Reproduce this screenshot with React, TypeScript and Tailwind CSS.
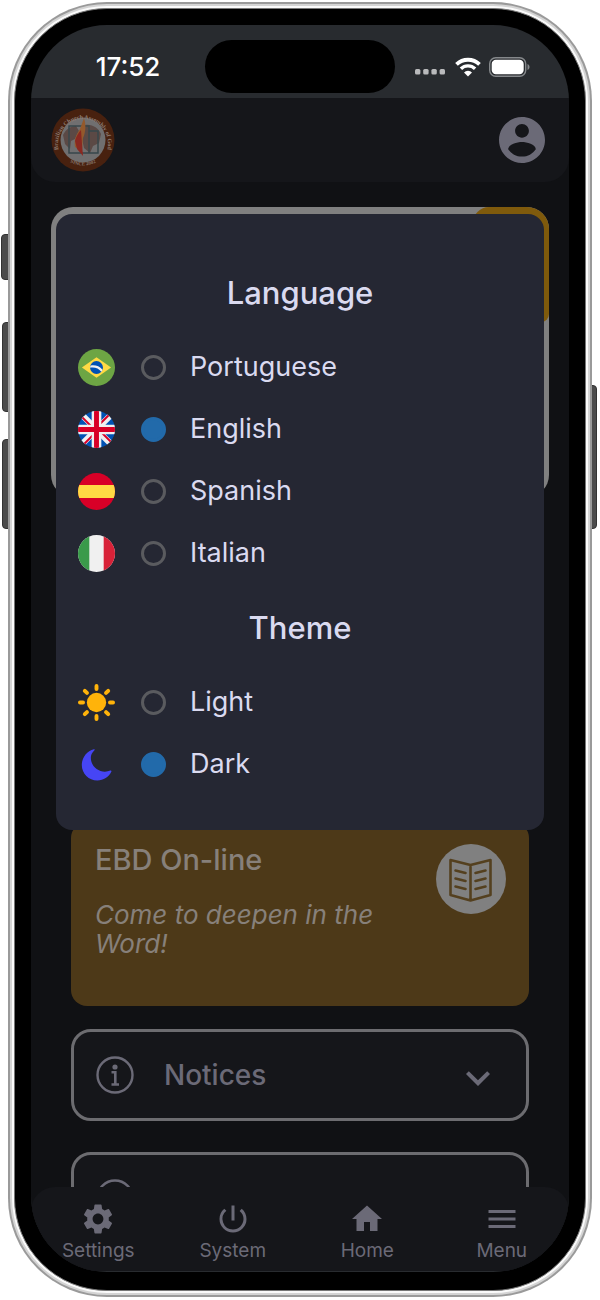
import { useState } from 'react'
import type { ReactNode } from 'react'
import { MdExpandMore, MdHome, MdMenu, MdPowerSettingsNew, MdSettings } from 'react-icons/md'

// MARK: - Flags and theme icons

function BrazilFlag() {
  return (
    <svg viewBox="0 0 36 36" className="size-full" aria-hidden="true">
      <circle cx="18" cy="18" r="18" fill="#6da544" />
      <path d="M18 8l14.2 10L18 28 3.8 18z" fill="#ffda44" />
      <circle cx="18" cy="18" r="6.3" fill="#0052b4" />
      <path d="M12 16.2c4.4-.9 8.8.3 11.9 3.9-.3.9-.7 1.5-1.2 2-2.6-3.3-6.3-4.7-10.900-3.900z" fill="#f0f0f0" />
    </svg>
  )
}

function UkFlag() {
  return (
    <svg viewBox="0 0 36 36" className="size-full rounded-full" aria-hidden="true">
      <path d="M0 0h36v36H0z" fill="#0052b4" />
      <path d="M2 2l32 32M34 2L2 34" stroke="#f0f0f0" strokeWidth="6" />
      <path d="M3 5l11 11M33 31L22 20M31 3L22 12M5 33l10-10" stroke="#d80027" strokeWidth="2" />
      <path d="M18 0v36M0 18h36" stroke="#f0f0f0" strokeWidth="9.4" />
      <path d="M18 0v36M0 18h36" stroke="#d80027" strokeWidth="4.8" />
    </svg>
  )
}

function SpainFlag() {
  return (
    <svg viewBox="0 0 36 36" className="size-full rounded-full" aria-hidden="true">
      <path d="M0 0h36v36H0z" fill="#d80027" />
      <path d="M0 11.7h36v12.6H0z" fill="#ffda44" />
    </svg>
  )
}

function ItalyFlag() {
  return (
    <svg viewBox="0 0 36 36" className="size-full rounded-full" aria-hidden="true">
      <path d="M0 0h36v36H0z" fill="#f0f0f0" />
      <path d="M0 0h11v36H0z" fill="#3a9a4a" />
      <path d="M25 0h11v36H25z" fill="#d82238" />
    </svg>
  )
}

const SUN_RAYS = [0, 45, 90, 135, 180, 225, 270, 315]

function SunIcon() {
  return (
    <svg viewBox="0 0 36 36" className="size-full" aria-hidden="true">
      <circle cx="18" cy="18" r="9.4" fill="#ffb30a" />
      {SUN_RAYS.map((angle) => (
        <path
          key={angle}
          d="M18 1.9v3"
          transform={`rotate(${angle} 18 18)`}
          stroke="#ffb30a"
          strokeWidth="3.8"
          strokeLinecap="round"
        />
      ))}
    </svg>
  )
}

function MoonIcon() {
  return (
    <svg viewBox="0 0 36 36" className="size-full" aria-hidden="true">
      <path
        d="M15.5 3.2C8.7 5 3.7 11.2 3.7 18.5c0 8.5 6.8 15.1 15.1 15.1 6 0 11.3-3.5 13.7-8.7.3-.8-.3-1.3-1-1-8.9 3.6-19-2.6-19-12.4 0-2.6.9-4.900 3.500-7.400.5-.6.1-1.100-.5-.9z"
        fill="#4645f5"
      />
    </svg>
  )
}

// MARK: - App icons

function ChurchLogo() {
  return (
    <svg viewBox="0 0 64 64" className="size-16" role="img" aria-label="Brazilian Church Assembly of God">
      <circle cx="32" cy="32" r="31.5" fill="#48210f" />
      <circle cx="32" cy="32" r="22.5" fill="#706f70" />
      <path d="M12 27c3-6 8-9 13-9l3 5-4 8-4 2-1 8-5-5zM34 17c8-1 14 4 16 9l-2 9-6 3-3 7-6-5-2-9z" fill="#5b4945" />
      <path d="M18 18h20v27H18zM38 23h9v22h-9" fill="none" stroke="#37474b" strokeWidth="1.5" />
      <path d="M33 10c2 6 2 14-1 20l-1 13-7-4c-1-8 1-12 5-18z" fill="#93592c" />
      <path d="M24 33c1-4 3-8 6-11l1 14 1 12-6-7z" fill="#8a2820" />
      <path id="logo-top" d="M8.5 44.5A25 25 0 1 1 55.5 44.5" fill="none" />
      <path id="logo-bottom" d="M16 52.5A28.3 28.3 0 0 0 48 52.5" fill="none" />
      <text fill="#8d7c73" fontSize="6" fontWeight="700" fontFamily="Liberation Serif, serif">
        <textPath href="#logo-top" startOffset="50%" textAnchor="middle">
          Brazilian Church Assembly of God
        </textPath>
      </text>
      <text fill="#85746b" fontSize="5" fontWeight="700" fontFamily="Liberation Serif, serif">
        <textPath href="#logo-bottom" startOffset="50%" textAnchor="middle">
          SINCE 2002
        </textPath>
      </text>
    </svg>
  )
}

function AccountIcon() {
  return (
    <svg viewBox="2 2 20 20" className="size-[46px]" fill="currentColor" aria-hidden="true">
      <path d="M12 2C6.48 2 2 6.48 2 12s4.48 10 10 10 10-4.48 10-10S17.52 2 12 2zm0 3c1.66 0 3 1.34 3 3s-1.34 3-3 3-3-1.34-3-3 1.34-3 3-3zm0 14.2c-2.5 0-4.71-1.28-6-3.22.03-1.99 4-3.08 6-3.08 1.99 0 5.97 1.09 6 3.08-1.29 1.94-3.5 3.22-6 3.22z" />
    </svg>
  )
}

function InfoIcon() {
  return (
    <svg viewBox="0 0 38 38" className="size-[38px] shrink-0" aria-hidden="true">
      <circle cx="19" cy="19" r="17.5" fill="none" stroke="currentColor" strokeWidth="2.4" />
      <circle cx="19" cy="11" r="2.6" fill="currentColor" />
      <path d="M15.5 16.2h3.8v12.3M15.5 28.5h7.5" fill="none" stroke="currentColor" strokeWidth="2.6" />
    </svg>
  )
}

function BookIcon() {
  return (
    <svg
      viewBox="0 0 70 70"
      className="size-[70px] shrink-0 rounded-full bg-[#808080]"
      fill="none"
      stroke="#54401f"
      strokeWidth="2.6"
      strokeLinecap="round"
      strokeLinejoin="round"
      aria-hidden="true"
    >
      <path d="M34.5 21L14.5 16v35l20 5.500 20-5.500V16zM34.500 21v35.500" />
      <path d="M19.5 26.5l10 2.5M19.5 34.5l10 2.5M19.5 42.5l10 2.5M49.5 26.5l-10 2.5M49.5 34.5l-10 2.5M49.5 42.5l-10 2.5" />
    </svg>
  )
}

// MARK: - Status bar

function StatusBar() {
  return (
    <div className="grid h-[73px] grid-cols-[1fr_190px_1fr] items-center pt-2.5 text-white">
      <span className="pl-5 text-center text-[26px] leading-8 font-medium">17:52</span>
      <span className="h-[53px] rounded-full bg-black" />
      <div className="flex items-center pl-5">
        <svg viewBox="0 0 30 20" className="h-5 w-[30px]" fill="#b9babc" aria-hidden="true">
          <rect x="0" y="12" width="5.4" height="5.4" rx="1.5" />
          <rect x="8.2" y="12" width="5.4" height="5.4" rx="1.5" />
          <rect x="16.4" y="12" width="5.4" height="5.4" rx="1.5" />
          <rect x="24.6" y="12" width="5.4" height="5.4" rx="1.5" />
        </svg>
        <svg viewBox="0 0 26 20" className="ml-2.5 h-5 w-[26px]" fill="none" stroke="currentColor" aria-hidden="true">
          <path d="M1.5 7.4a16.5 16.5 0 0 1 23 0" strokeWidth="3.8" />
          <path d="M5.9 11.8a10.2 10.2 0 0 1 14.2 0" strokeWidth="3.4" />
          <path d="M9 15.5a5.7 5.7 0 0 1 8 0L13 19.5z" fill="currentColor" stroke="none" />
        </svg>
        <svg viewBox="0 0 42 20" className="ml-2 h-5 w-[42px]" aria-hidden="true">
          <rect x="0.7" y="0.7" width="36" height="18.6" rx="6" fill="none" stroke="#85888b" strokeWidth="1.4" />
          <rect x="2.7" y="2.7" width="32" height="14.6" rx="4.2" fill="#fff" />
          <path d="M38.5 7v6c1.3-.5 2-1.6 2-3s-.7-2.5-2-3z" fill="#85888b" />
        </svg>
      </div>
    </div>
  )
}

// MARK: - Preferences dialog

type Option = { value: string; label: string; icon: ReactNode }

const LANGUAGES: Option[] = [
  { value: 'pt', label: 'Portuguese', icon: <BrazilFlag /> },
  { value: 'en', label: 'English', icon: <UkFlag /> },
  { value: 'es', label: 'Spanish', icon: <SpainFlag /> },
  { value: 'it', label: 'Italian', icon: <ItalyFlag /> },
]

const THEMES: Option[] = [
  { value: 'light', label: 'Light', icon: <SunIcon /> },
  { value: 'dark', label: 'Dark', icon: <MoonIcon /> },
]

type OptionGroupProps = {
  name: string
  title: string
  options: Option[]
  value: string
  onChange: (value: string) => void
}

function OptionGroup({ name, title, options, value, onChange }: OptionGroupProps) {
  return (
    <section className="mt-6" role="radiogroup" aria-label={title}>
      <h2 className="mb-[23px] text-center text-[31px] leading-10 font-medium">{title}</h2>
      {options.map((option) => (
        <label key={option.value} className="flex h-[62px] cursor-pointer items-center gap-6 text-[27px]">
          <span className="mr-0.5 size-[37px] shrink-0">{option.icon}</span>
          <input
            type="radio"
            name={name}
            value={option.value}
            checked={value === option.value}
            onChange={() => onChange(option.value)}
            className="size-[25px] appearance-none rounded-full border-3 border-[#5a5b5f] checked:border-[#226aaa] checked:bg-[#226aaa]"
          />
          {option.label}
        </label>
      ))}
    </section>
  )
}

function PreferencesDialog() {
  const [language, setLanguage] = useState('en')
  const [theme, setTheme] = useState('dark')

  return (
    <div
      role="dialog"
      aria-label="Language and theme"
      className="absolute inset-x-[25px] top-[189px] rounded-2xl bg-[#252733] px-[22px] py-[35px] text-[#dadaf0]"
    >
      <OptionGroup name="language" title="Language" options={LANGUAGES} value={language} onChange={setLanguage} />
      <OptionGroup name="theme" title="Theme" options={THEMES} value={theme} onChange={setTheme} />
    </div>
  )
}

// MARK: - App content

function NoticeCard({ title }: { title?: string }) {
  return (
    <button
      type="button"
      aria-label={title ?? 'More'}
      className="flex h-[92px] w-full items-center rounded-[20px] border-3 border-[#6c6c70] bg-[#15161a] pr-6 pl-[22px] text-[#6b6a77]"
    >
      <InfoIcon />
      <span className="ml-[30px] flex-1 text-left text-[28px] font-medium">{title}</span>
      <MdExpandMore className="mt-1.5 size-12" aria-hidden="true" />
    </button>
  )
}

const NAV_ITEMS = [
  { label: 'Settings', Icon: MdSettings },
  { label: 'System', Icon: MdPowerSettingsNew },
  { label: 'Home', Icon: MdHome },
  { label: 'Menu', Icon: MdMenu },
]

function BottomNav() {
  return (
    <nav className="grid h-21 grid-cols-4 rounded-t-3xl bg-[#15161a] text-[#6b6a77]">
      {NAV_ITEMS.map(({ label, Icon }) => (
        <button key={label} type="button" className="flex flex-col items-center pt-3.5 text-[19px] leading-7">
          <Icon className="size-9" aria-hidden="true" />
          {label}
        </button>
      ))}
    </nav>
  )
}

function AppScreen() {
  return (
    <div className="bg-[#101114]">
      <header className="flex h-21 items-center justify-between rounded-b-3xl bg-[#15161a] px-5 text-[#6b6a77]">
        <ChurchLogo />
        <button type="button" aria-label="Account" className="mr-1">
          <AccountIcon />
        </button>
      </header>

      <main className="px-5">
        <div className="mt-[25px] flex h-[290px] items-start justify-end overflow-hidden rounded-[22px] bg-[#808080]">
          <div className="h-[115px] w-[76px] rounded-tl-2xl rounded-br-lg bg-[#7f5a0c]" />
        </div>

        <div className="mx-5 mt-[325px]">
          <article className="flex h-46 justify-between rounded-2xl bg-[#4d3918] pt-[22px] pr-[23px] pl-6 text-[#87807a]">
            <div>
              <h3 className="text-[29px] leading-8 font-medium">EBD On-line</h3>
              <p className="mt-6 max-w-72 text-[26px] leading-[29px] italic">
                Come to deepen in the Word!
              </p>
            </div>
            <BookIcon />
          </article>
          <div className="mt-[23px]">
            <NoticeCard title="Notices" />
          </div>
          <div className="mt-[31px] h-[35px] overflow-hidden">
            <NoticeCard />
          </div>
        </div>
      </main>

      <BottomNav />
    </div>
  )
}

// MARK: - Device

export default function App() {
  return (
    <div className="bg-white px-2 pt-0.5 pb-[3px] font-['Inter',sans-serif]">
      <div className="relative">
        <span className="absolute top-[232px] -left-[7px] h-[46px] w-2 rounded-l-sm border border-[#333] bg-[#4b4b4b]" />
        <span className="absolute top-[320px] -left-[6px] h-[90px] w-2 rounded-l-sm border border-[#333] bg-[#4b4b4b]" />
        <span className="absolute top-[437px] -left-[6px] h-[90px] w-2 rounded-l-sm border border-[#333] bg-[#4b4b4b]" />
        <span className="absolute top-[383px] -right-[5px] h-[144px] w-2 rounded-r-sm border border-[#333] bg-[#4b4b4b]" />

        <div className="relative rounded-[99px] bg-[#9a9a9a] p-0.5">
          <div className="rounded-[97px] bg-[#d4d4d4] p-0.5">
            <div className="rounded-[95px] bg-[#fafafa] p-0.5">
              <div className="rounded-[93px] border border-[#777] bg-black p-4 pb-[18px]">
                <div className="relative overflow-hidden rounded-[76px] bg-[#282b2f] pb-px">
                  <StatusBar />
                  <AppScreen />
                  <PreferencesDialog />
                </div>
              </div>
            </div>
          </div>
        </div>
      </div>
    </div>
  )
}
